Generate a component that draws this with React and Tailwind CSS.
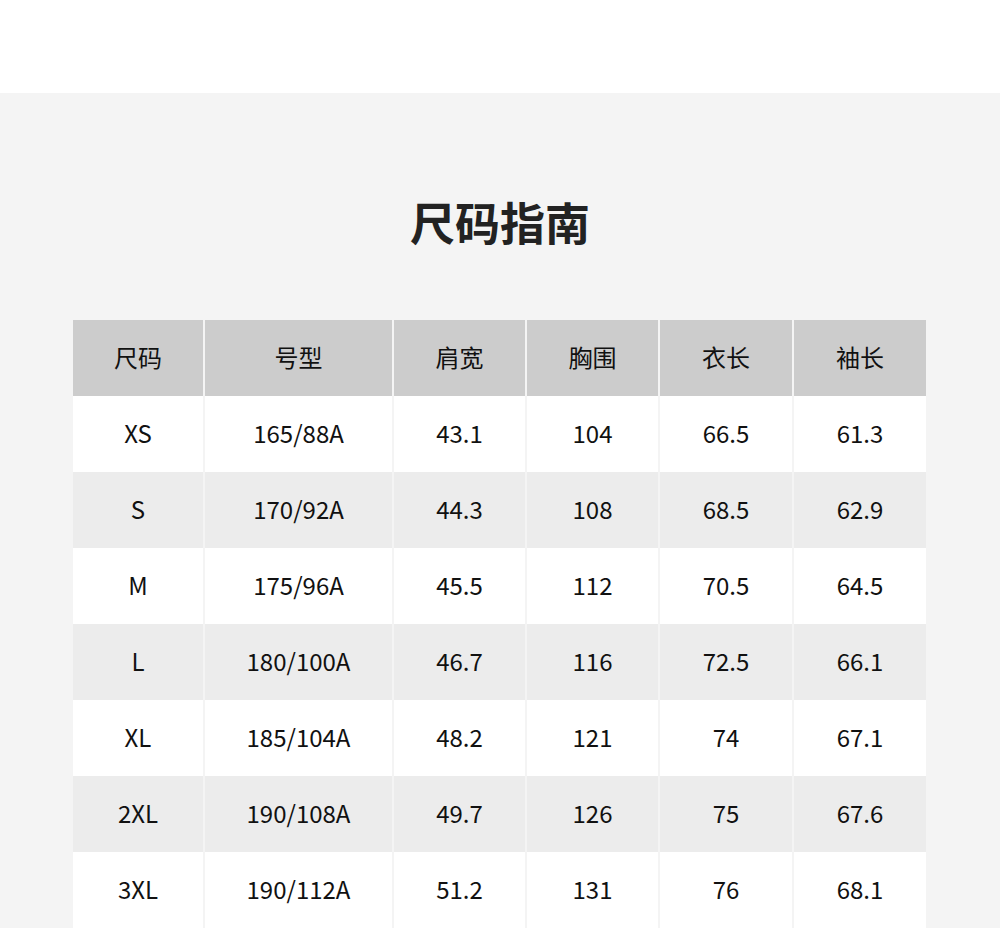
import React from 'react';

const headers = ['尺码', '号型', '肩宽', '胸围', '衣长', '袖长'];

const rows = [
  ['XS', '165/88A', '43.1', '104', '66.5', '61.3'],
  ['S', '170/92A', '44.3', '108', '68.5', '62.9'],
  ['M', '175/96A', '45.5', '112', '70.5', '64.5'],
  ['L', '180/100A', '46.7', '116', '72.5', '66.1'],
  ['XL', '185/104A', '48.2', '121', '74', '67.1'],
  ['2XL', '190/108A', '49.7', '126', '75', '67.6'],
  ['3XL', '190/112A', '51.2', '131', '76', '68.1'],
];

const cols = 'grid grid-cols-[130px_187px_131px_131px_132px_132px] gap-x-[2px]';

const App = () => {
  return (
    <div
      className="min-h-screen bg-white"
      style={{ fontFamily: '"Noto Sans CJK SC", "Noto Sans", sans-serif' }}
    >
      <div className="h-[93px] bg-white" />
      <div className="bg-[#f4f4f4] pb-20">
        <h1 className="pt-[101px] text-center text-[45px] leading-[56px] font-bold text-[#222222]">
          尺码指南
        </h1>

        <div className="ml-[73px] mt-[70px] w-[853px]">
          <div className={cols}>
            {headers.map((h) => (
              <div
                key={h}
                className="flex h-[76px] items-center justify-center bg-[#cccccc] pb-[3px] text-[24px] text-[#111111]"
              >
                {h}
              </div>
            ))}
          </div>
          {rows.map((row, i) => (
            <div key={row[0]} className={cols}>
              {row.map((cell, j) => (
                <div
                  key={j}
                  className={`flex h-[76px] items-center justify-center pb-[2px] text-[24px] text-[#111111] ${
                    i % 2 === 0 ? 'bg-white' : 'bg-[#ececec]'
                  }`}
                >
                  {cell}
                </div>
              ))}
            </div>
          ))}
        </div>
      </div>
    </div>
  );
};

export default App;
